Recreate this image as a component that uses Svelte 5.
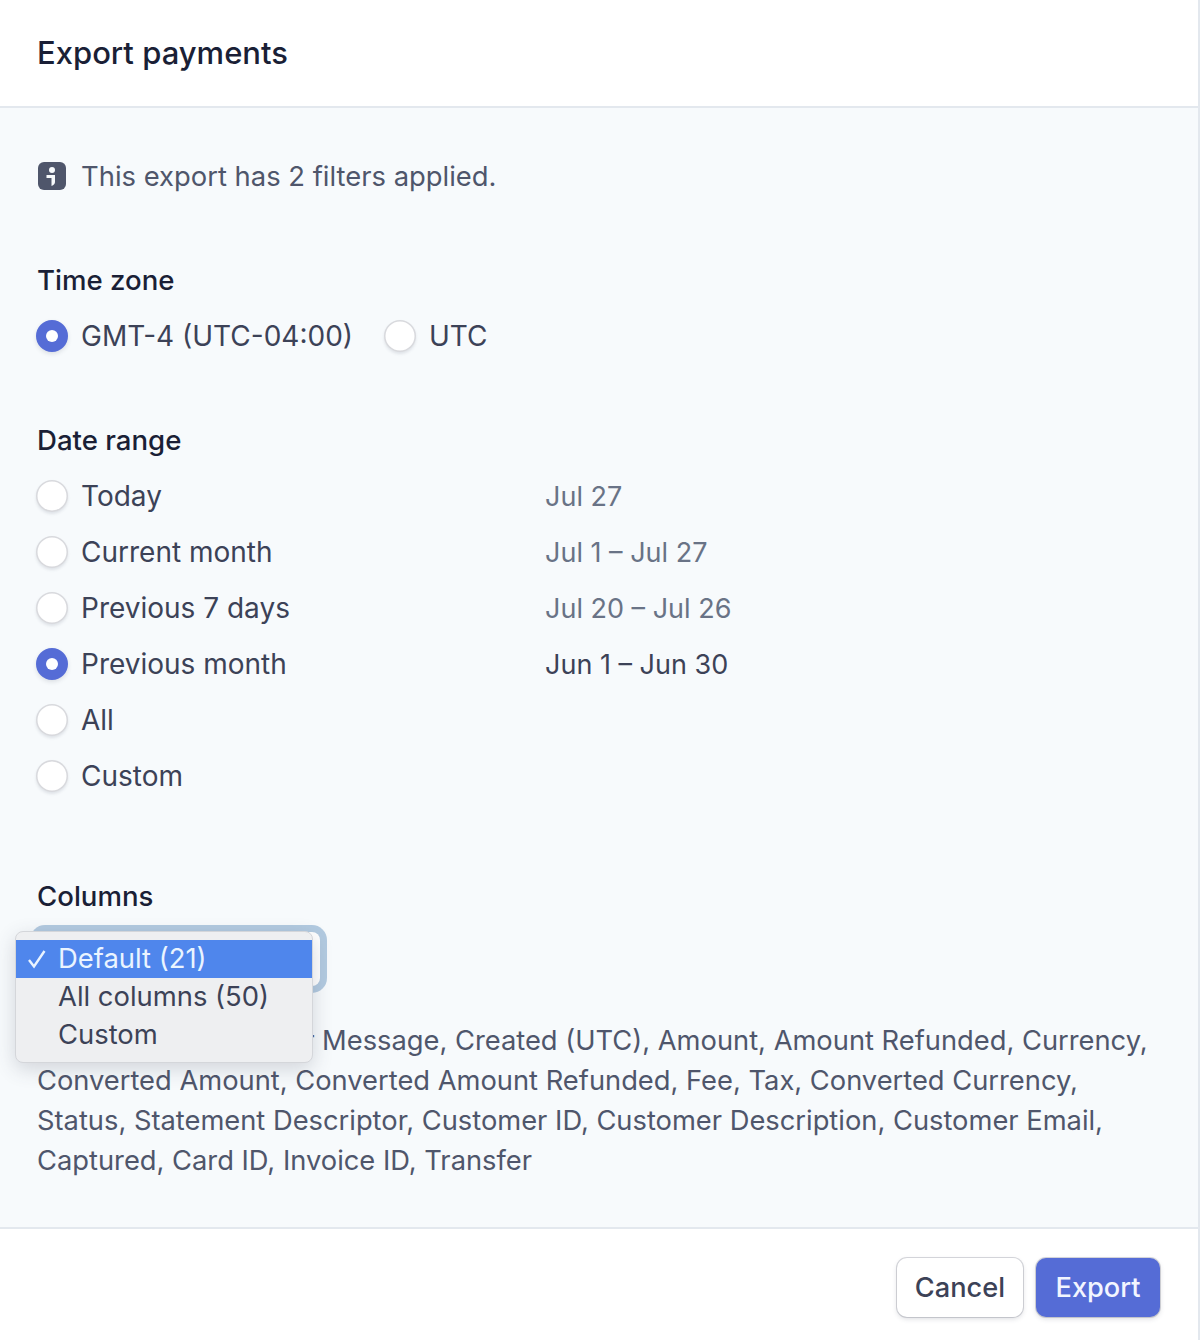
<script>
  const zones = [
    { label: 'GMT-4 (UTC-04:00)', on: true },
    { label: 'UTC', on: false },
  ]

  const ranges = [
    { label: 'Today', dates: 'Jul 27' },
    { label: 'Current month', dates: 'Jul 1 – Jul 27' },
    { label: 'Previous 7 days', dates: 'Jul 20 – Jul 26' },
    { label: 'Previous month', dates: 'Jun 1 – Jun 30', on: true },
    { label: 'All' },
    { label: 'Custom' },
  ]

  const options = ['Default (21)', 'All columns (50)', 'Custom']
</script>

<div class="modal">
  <header class="head">Export payments</header>

  <main class="body">
    <div class="notice">
      <svg class="info" width="28" height="28" viewBox="0 0 28 28">
        <rect width="28" height="28" rx="6" fill="#4f566b" />
        <circle cx="14" cy="8" r="3" fill="#f7fafc" />
        <path d="M8.5 13h8.5v7q0 2.5-3.5 4v-8h-5z" fill="#f7fafc" />
      </svg>
      <span>This export has 2 filters applied.</span>
    </div>

    <section class="zone">
      <div class="label">Time zone</div>
      <div class="zones">
        {#each zones as z}
          <div class="radio">
            <span class="dot" class:on={z.on}></span>
            <span>{z.label}</span>
          </div>
        {/each}
      </div>
    </section>

    <section class="range">
      <div class="label">Date range</div>
      <div class="rows">
        {#each ranges as r}
          <div class="row">
            <div class="radio">
              <span class="dot" class:on={r.on}></span>
              <span>{r.label}</span>
            </div>
            {#if r.dates}
              <span class="dates" class:active={r.on}>{r.dates}</span>
            {/if}
          </div>
        {/each}
      </div>
    </section>

    <section class="cols">
      <div class="label">Columns</div>
      <div class="select"></div>
      <p class="list">
        ID, Description, Seller Message, Created (UTC), Amount, Amount Refunded, Currency,
        Converted Amount, Converted Amount Refunded, Fee, Tax, Converted Currency,
        Status, Statement Descriptor, Customer ID, Customer Description, Customer Email,
        Captured, Card ID, Invoice ID, Transfer
      </p>
      <div class="menu">
        {#each options as o, i}
          <div class="opt" class:sel={i === 0}>
            {#if i === 0}
              <svg class="tick" width="20" height="20" viewBox="0 0 20 20">
                <path d="M2 11l5 6.5L17.5 2" fill="none" stroke="#eaf4ff" stroke-width="2.4" />
              </svg>
            {/if}
            {o}
          </div>
        {/each}
      </div>
    </section>
  </main>

  <footer class="foot">
    <button class="btn">Cancel</button>
    <button class="btn primary">Export</button>
  </footer>
</div>

<style>
  :global(body) {
    margin: 0;
    background: #fff;
  }
  .modal {
    width: 1200px;
    height: 1340px;
    box-sizing: border-box;
    border-right: 2px solid #e3e8ee;
    display: flex;
    flex-direction: column;
    font-family: Inter, "Liberation Sans", sans-serif;
    font-size: 28px;
    line-height: 40px;
    color: #3c4257;
    background: #fff;
  }
  .head {
    height: 108px;
    box-sizing: border-box;
    padding: 33px 37px 0;
    border-bottom: 2px solid #e3e8ee;
    font-size: 31px;
    font-weight: 500;
    color: #1a1f36;
    flex: none;
  }
  .body {
    flex: 1;
    background: #f7fafc;
    padding: 48px 37px 0;
  }
  .notice {
    display: flex;
    align-items: center;
    gap: 15px;
    height: 40px;
    font-size: 27.4px;
    color: #4f566b;
  }
  .info {
    margin-left: 1px;
    flex: none;
  }
  .label {
    font-size: 27.6px;
    font-weight: 500;
    color: #1a1f36;
    height: 40px;
  }
  .zone {
    margin-top: 64px;
  }
  .zones {
    display: flex;
    gap: 32px;
    margin-top: 16px;
  }
  .radio {
    display: flex;
    align-items: center;
    gap: 13px;
    height: 40px;
  }
  .dot {
    width: 32px;
    height: 32px;
    box-sizing: border-box;
    border-radius: 50%;
    background: #fff;
    margin-left: -1px;
    box-shadow: inset 0 0 0 1.5px rgba(60, 66, 87, 0.2), 0 2px 3px rgba(60, 66, 87, 0.12);
    flex: none;
  }
  .dot.on {
    background: #556cd6;
    border: 10px solid #556cd6;
    box-shadow: 0 2px 4px rgba(60, 66, 87, 0.14);
  }
  .dot.on::after {
    content: '';
    display: block;
    width: 12px;
    height: 12px;
    border-radius: 50%;
    background: #fff;
  }
  .range {
    margin-top: 64px;
  }
  .rows {
    margin-top: 16px;
    display: grid;
    gap: 16px;
  }
  .row {
    display: flex;
    height: 40px;
  }
  .row .radio {
    width: 508px;
  }
  .dates {
    font-size: 27px;
    line-height: 42px;
    color: #697386;
  }
  .dates.active {
    color: #3c4257;
  }
  .cols {
    margin-top: 80px;
    position: relative;
  }
  .select {
    height: 54px;
    width: 283px;
    margin-top: 16px;
    border-radius: 8px;
    background: #fff;
    box-shadow: 0 0 0 7px rgba(122, 162, 200, 0.55);
  }
  .list {
    margin: 35px 0 0;
    width: 1126px;
    font-size: 27.3px;
    color: #4f566b;
  }
  .menu {
    position: absolute;
    left: -22px;
    top: 55px;
    width: 298px;
    box-sizing: border-box;
    padding: 8px 0;
    background: #eeeff1;
    border: 1px solid #d4d6da;
    border-radius: 8px;
    box-shadow: 0 6px 20px rgba(60, 66, 87, 0.2);
    font-size: 27.4px;
    color: #3c4257;
    line-height: 36px;
  }
  .opt {
    height: 38px;
    padding-left: 42px;
    position: relative;
  }
  .opt.sel {
    background: #4f86ec;
    color: #eaf4ff;
  }
  .tick {
    position: absolute;
    left: 11px;
    top: 9px;
  }
  .foot {
    height: 113px;
    flex: none;
    box-sizing: border-box;
    border-top: 2px solid #e3e8ee;
    display: flex;
    justify-content: flex-end;
    align-items: flex-start;
    gap: 13px;
    padding: 29px 38px 0 0;
  }
  .btn {
    height: 59px;
    padding: 0 18px;
    border: none;
    border-radius: 10px;
    font: inherit;
    font-size: 27.2px;
    font-weight: 500;
    color: #3c4257;
    background: #fff;
    box-shadow: 0 0 0 1px rgba(60, 66, 87, 0.2), 0 2px 5px rgba(60, 66, 87, 0.18);
  }
  .btn.primary {
    padding: 0 19px;
    width: 124px;
    background: #556cd6;
    color: #f2f5ff;
  }
</style>
